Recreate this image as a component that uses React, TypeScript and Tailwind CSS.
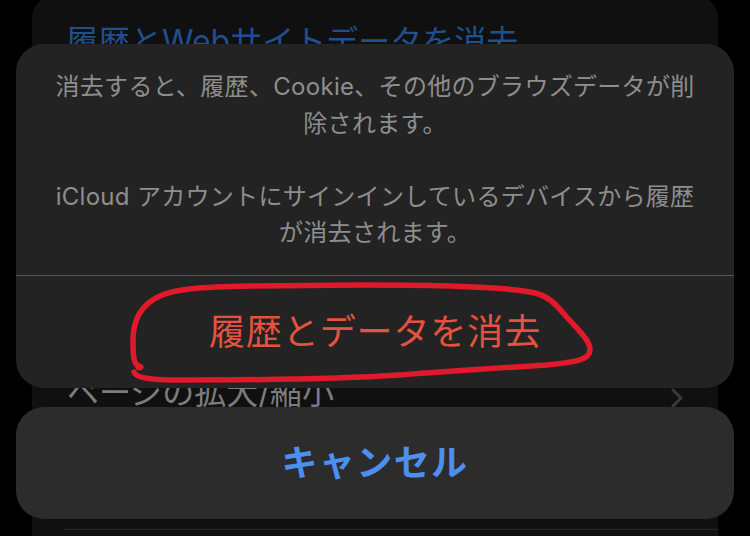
import React from "react";

const FONT = "font-['Inter','Noto_Sans_CJK_JP',sans-serif]";

export default function App() {
  return (
    <div className={`relative w-[750px] h-[536px] overflow-hidden bg-black ${FONT}`}>
      {/* settings list behind the sheet */}
      <div className="mx-[32px] mt-[-4px] h-[560px] rounded-[22px] bg-[#101010] flex flex-col">
        <div className="pt-[26px] pl-[34px] text-[32px] leading-[40px] text-[#1f4f8e] whitespace-nowrap">
          履歴とWebサイトデータを消去
        </div>
        <div className="mt-[311px] pl-[35px] pr-[34px] flex items-center justify-between h-[40px]">
          <span className="text-[32px] leading-[40px] text-[#7c7c7c] whitespace-nowrap">ページの拡大/縮小</span>
          <svg width="14" height="20" viewBox="0 0 14 20" className="mt-[10px]">
            <path d="M3 2 L11 10 L3 18" fill="none" stroke="#3a3a3a" strokeWidth="3" strokeLinecap="round" strokeLinejoin="round" />
          </svg>
        </div>
        <div className="mt-[116px] ml-[32px] h-px bg-[#282828]" />
      </div>

      {/* action sheet */}
      <div className="absolute left-[16px] top-[44px] w-[718px] flex flex-col gap-[19px]">
        <div className="rounded-[28px] bg-[#232323] flex flex-col overflow-hidden">
          <div className="h-[231px] pt-[25px] flex flex-col items-center text-[24px] leading-[36.5px] tracking-[0.3px] text-[#8e8e8e] whitespace-nowrap">
            <div>消去すると、履歴、Cookie、その他のブラウズデータが削</div>
            <div>除されます。</div>
            <div className="h-[36.5px]" />
            <div>iCloud アカウントにサインインしているデバイスから履歴</div>
            <div>が消去されます。</div>
          </div>
          <div className="h-px bg-[#555555]" />
          <div className="h-[112px] flex items-center justify-center text-[36px] leading-[44px] tracking-[0.9px] text-[#e6523f] whitespace-nowrap">
            履歴とデータを消去
          </div>
        </div>
        <div className="h-[112px] rounded-[28px] bg-[#2c2c2c] flex items-center justify-center text-[36px] leading-[44px] tracking-[1.4px] font-bold text-[#4d8ff0] whitespace-nowrap">
          キャンセル
        </div>
      </div>

      {/* red hand-drawn annotation */}
      <svg className="absolute left-0 top-0 pointer-events-none" width="750" height="536" viewBox="0 0 750 536">
        <path
          d="M141 367 C133 366 133 355 133 340 C133 322 140 305 160 296 C175 289 200 287 250 286 L360 285 C440 285 510 287 535 293 C550 297 556 305 565 315 C578 330 590 340 590 350 C590 360 575 362 547 365 C500 368 450 371 400 375 C340 379 250 380 180 380 C150 380 136 378 134 372"
          fill="none"
          stroke="#e11a2b"
          strokeWidth="5.5"
          strokeLinecap="round"
          strokeLinejoin="round"
        />
        <circle cx="139" cy="367" r="3.5" fill="#e11a2b" />
      </svg>
    </div>
  );
}
